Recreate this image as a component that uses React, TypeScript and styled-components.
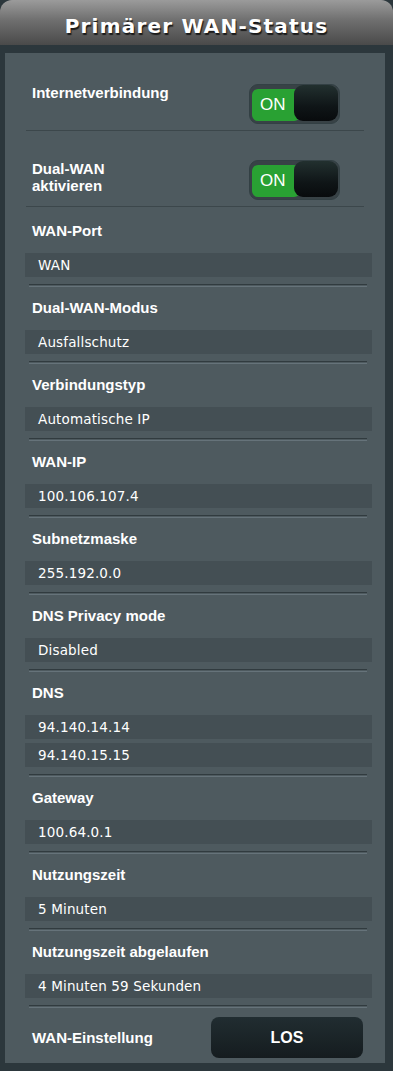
import React from "react";
import styled, { createGlobalStyle } from "styled-components";

interface Field {
  label: string;
  values: string[];
}

const fields: Field[] = [
  { label: "WAN-Port", values: ["WAN"] },
  { label: "Dual-WAN-Modus", values: ["Ausfallschutz"] },
  { label: "Verbindungstyp", values: ["Automatische IP"] },
  { label: "WAN-IP", values: ["100.106.107.4"] },
  { label: "Subnetzmaske", values: ["255.192.0.0"] },
  { label: "DNS Privacy mode", values: ["Disabled"] },
  { label: "DNS", values: ["94.140.14.14", "94.140.15.15"] },
  { label: "Gateway", values: ["100.64.0.1"] },
  { label: "Nutzungszeit", values: ["5 Minuten"] },
  { label: "Nutzungszeit abgelaufen", values: ["4 Minuten 59 Sekunden"] },
];

const Toggle: React.FC<{ on: boolean }> = ({ on }) => (
  <Switch>
    <Track>{on ? "ON" : "OFF"}</Track>
    <Knob />
  </Switch>
);

const App: React.FC = () => {
  return (
    <>
      <GlobalStyle />
      <Page>
        <Header>
          <Title>Primärer WAN-Status</Title>
        </Header>
        <Panel>
          <ToggleRow>
            <RowLabel>Internetverbindung</RowLabel>
            <Toggle on />
          </ToggleRow>
          <ToggleRow>
            <RowLabel>
              Dual-WAN
              <br />
              aktivieren
            </RowLabel>
            <Toggle on />
          </ToggleRow>
          <FieldList>
            {fields.map((item) => (
              <FieldBlock key={item.label}>
                <FieldLabel>{item.label}</FieldLabel>
                <Values>
                  {item.values.map((v) => (
                    <ValueBox key={v}>{v}</ValueBox>
                  ))}
                </Values>
                <Divider />
              </FieldBlock>
            ))}
          </FieldList>
          <ActionRow>
            <FieldLabel>WAN-Einstellung</FieldLabel>
            <GoButton>LOS</GoButton>
          </ActionRow>
        </Panel>
      </Page>
    </>
  );
};

export default App;

const GlobalStyle = createGlobalStyle`
  html, body {
    margin: 0;
    padding: 0;
    background: #2c373c;
  }
  * {
    box-sizing: border-box;
  }
`;

const Page = styled.div`
  width: 393px;
  min-height: 1071px;
  background: #2c373c;
  padding-bottom: 8px;
`;

const Header = styled.div`
  height: 45px;
  display: flex;
  align-items: center;
  justify-content: center;
  padding-top: 7px;
  border-radius: 12px 12px 0 0;
  background: linear-gradient(to bottom, #9b9b9b 0%, #6f6f6f 45%, #4a4a4a 100%);
`;

const Title = styled.h1`
  margin: 0;
  font-family: "DejaVu Sans", Verdana, sans-serif;
  font-weight: bold;
  font-size: 20px;
  letter-spacing: 1.2px;
  color: #fff;
  text-shadow: 1px 2px 1px #1a1a1a;
`;

const Panel = styled.div`
  margin: 8px 8px 0 5px;
  background: #4e5a5f;
  padding-bottom: 5px;
  font-family: "Liberation Sans", Arial, sans-serif;
  color: #fff;
`;

const ToggleRow = styled.div`
  display: flex;
  align-items: flex-start;
  justify-content: space-between;
  margin: 0 21px;
  padding: 29px 24px 6px 6px;
  border-bottom: 1px solid #3c474b;

  &:first-child {
    padding-top: 31px;
  }
`;

const RowLabel = styled.div`
  font-size: 15px;
  font-weight: bold;
  line-height: 17px;
`;

const Switch = styled.div`
  position: relative;
  width: 91px;
  height: 40px;
  border-radius: 9px;
  background: #384246;
  border: 1px solid #334044;
`;

const Track = styled.div`
  position: absolute;
  left: 2px;
  top: 4px;
  width: 48px;
  height: 32px;
  border-radius: 6px;
  background: #29a133;
  padding-left: 8px;
  font-size: 17px;
  line-height: 32px;
  color: #fff;
`;

const Knob = styled.div`
  position: absolute;
  right: 1px;
  top: 0;
  width: 44px;
  height: 36px;
  border-radius: 9px;
  background: linear-gradient(to bottom, #22302f 0%, #0f1517 60%, #080b0d 100%);
`;

const FieldList = styled.div`
  padding-top: 3px;
`;

const FieldBlock = styled.div`
  padding: 13px 13px 0 20px;
`;

const FieldLabel = styled.div`
  padding-left: 7px;
  font-family: "Liberation Sans", Arial, sans-serif;
  font-size: 15px;
  font-weight: bold;
  line-height: 16px;
  color: #fff;
`;

const Values = styled.div`
  display: flex;
  flex-direction: column;
  gap: 4px;
  margin-top: 14px;
`;

const ValueBox = styled.div`
  height: 24px;
  padding-left: 13px;
  background: #444f54;
  font-family: "DejaVu Sans", Verdana, sans-serif;
  font-size: 13.5px;
  letter-spacing: 0.15px;
  line-height: 24px;
  color: #fff;
`;

const Divider = styled.div`
  height: 3px;
  margin: 7px 5px 0 4px;
  border-top: 1px solid #313b3f;
  border-bottom: 1px solid #66737a;
`;

const ActionRow = styled.div`
  display: flex;
  align-items: center;
  justify-content: space-between;
  padding: 9px 22px 0 20px;
`;

const GoButton = styled.button`
  width: 152px;
  height: 41px;
  border: none;
  border-radius: 8px;
  background: linear-gradient(to bottom, #212d31 0%, #151c1f 100%);
  font-family: "Liberation Sans", Arial, sans-serif;
  font-size: 16px;
  font-weight: bold;
  color: #fff;
  cursor: pointer;
`;
